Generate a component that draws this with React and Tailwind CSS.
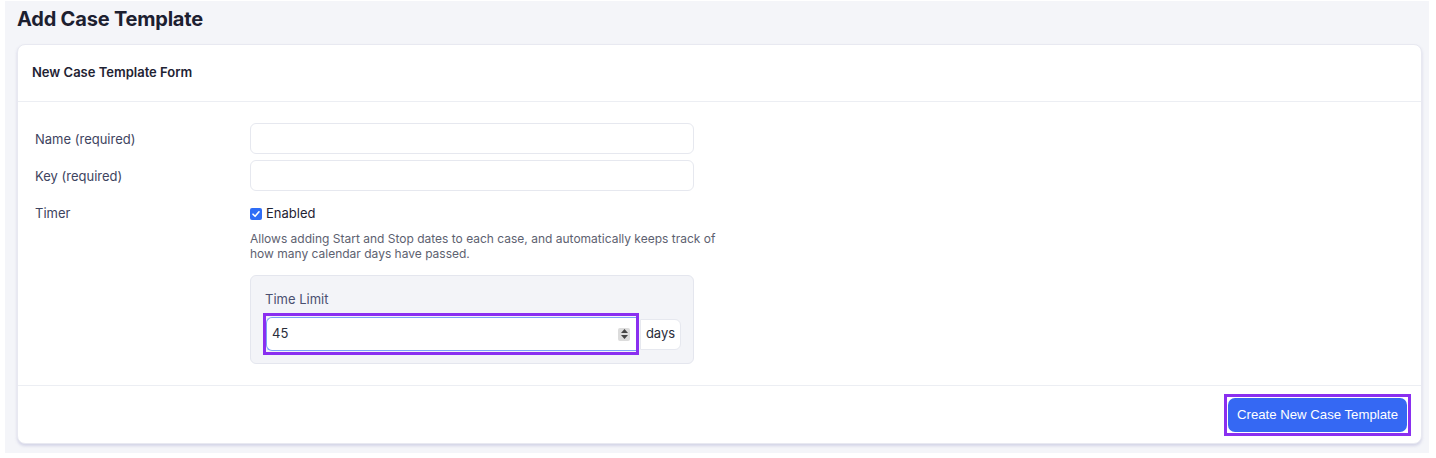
export default function App() {
  const font = { fontFamily: "Inter, 'Noto Sans', Arial, sans-serif" };
  return (
    <div className="w-[1436px] h-[458px] bg-white pl-[5px] pr-[7px] pt-[1px] pb-[5px]" style={font}>
      <div className="h-full bg-[#f4f5f9] pl-[12px] pr-[7px] pt-[5px]">
        <h1 className="text-[20px] leading-[26px] font-bold text-[#1c2030] tracking-[-0.2px]">Add Case Template</h1>
        <div className="mt-[12px] bg-white rounded-[8px] border border-[#e8e9f1] shadow-[0_2px_3px_rgba(120,120,180,0.25)]">
          <div className="h-[57px] flex items-center px-[14px] border-b border-[#eceef3]">
            <span className="text-[13px] font-semibold text-[#1f2333]">New Case Template Form</span>
          </div>
          <div className="pt-[21px] pb-[21px] pl-[17px]">
            <div className="grid grid-cols-[215px_490px] gap-y-[6px]">
              <div className="h-[31px] pt-[3px] flex items-center text-[13px] text-[#3e4460]">Name (required)</div>
              <div className="w-[444px] h-[31px] rounded-[6px] border border-[#e6e8ef] bg-white"></div>
              <div className="h-[31px] pt-[3px] flex items-center text-[13px] text-[#3e4460]">Key (required)</div>
              <div className="w-[444px] h-[31px] rounded-[6px] border border-[#e6e8ef] bg-white"></div>
              <div className="h-[34px] flex items-center text-[13px] text-[#3e4460]">Timer</div>
              <div>
                <div className="h-[34px] flex items-center gap-[4px]">
                  <span className="w-[12px] h-[12px] rounded-[2px] bg-[#2f6df6] flex items-center justify-center">
                    <svg width="10" height="10" viewBox="0 0 10 10"><path d="M2 5.2 L4.1 7.3 L8 2.8" fill="none" stroke="white" strokeWidth="1.6" strokeLinecap="round" strokeLinejoin="round" /></svg>
                  </span>
                  <span className="text-[13px] text-[#1f2333]">Enabled</span>
                </div>
                <p className="text-[12px] leading-[15px] text-[#5d6170] w-[480px]">Allows adding Start and Stop dates to each case, and automatically keeps track of how many calendar days have passed.</p>
                <div className="mt-[14px] w-[444px] h-[89px] rounded-[6px] border border-[#e4e6ee] bg-[#f3f4f8] pl-[12px] pt-[14px]">
                  <div className="pl-[2px] text-[13px] leading-[18px] text-[#4a5070]">Time Limit</div>
                  <div className="mt-[5px] flex items-center">
                    <div className="border-[3px] border-[#8a2ff0] py-[1px]">
                      <div className="w-[370px] h-[34px] rounded-l-[6px] bg-white border border-[#7aa2f7] border-r-0 flex items-center pl-[5px] pr-[6px]">
                        <span className="text-[13px] text-[#2a2d3a] flex-1">45</span>
                        <span className="w-[12px] h-[13px] bg-[#dcdcdc] rounded-[2px] flex flex-col items-center justify-center gap-[2px]">
                          <svg width="7" height="4" viewBox="0 0 7 4"><path d="M0 4 L3.5 0 L7 4 Z" fill="#444" /></svg>
                          <svg width="7" height="4" viewBox="0 0 7 4"><path d="M0 0 L3.5 4 L7 0 Z" fill="#444" /></svg>
                        </span>
                      </div>
                    </div>
                    <div className="h-[31px] w-[41px] ml-[1px] flex items-center justify-center bg-white border border-[#e6e8ef] rounded-r-[6px] text-[13px] text-[#2a2d3a]">days</div>
                  </div>
                </div>
              </div>
            </div>
          </div>
          <div className="h-[58px] border-t border-[#eceef3] flex items-center justify-end pr-[10px]">
            <div className="border-[3px] border-[#8a2ff0] p-[1px]">
              <button className="h-[34px] px-[9px] rounded-[7px] bg-[#3568f3] text-white text-[13.2px]" style={{ fontFamily: "'Liberation Sans', Arial, sans-serif" }}>Create New Case Template</button>
            </div>
          </div>
        </div>
      </div>
    </div>
  );
}
